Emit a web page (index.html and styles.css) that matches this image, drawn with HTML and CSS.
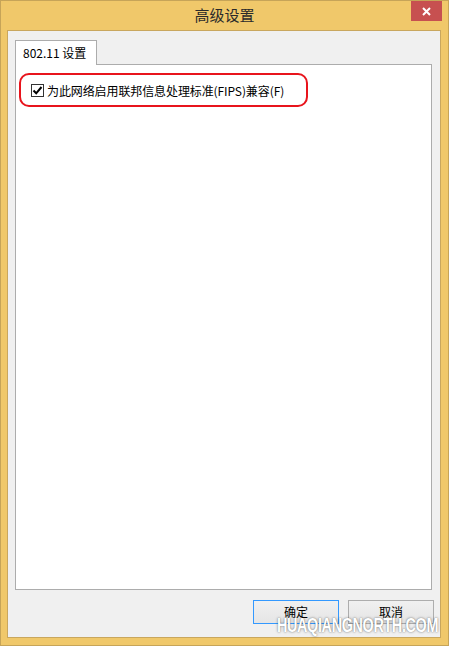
FILE: index.html
```html
<!DOCTYPE html>
<html lang="zh-CN">
<head>
<meta charset="utf-8">
<title>高级设置</title>
<link rel="stylesheet" href="styles.css">
</head>
<body>
<div class="window">
  <div class="titlebar">
    <span class="title">高级设置</span>
    <div class="close">
      <svg width="9" height="9" viewBox="0 0 9 9"><path d="M1 1 L8 8 M8 1 L1 8" stroke="#fff" stroke-width="2" fill="none"/></svg>
    </div>
  </div>
  <div class="client">
    <div class="tabs">
      <div class="tab">802.11 设置</div>
    </div>
    <div class="panel">
      <div class="highlight">
        <label class="check-row">
          <span class="checkbox">
            <svg width="11" height="11" viewBox="0 0 11 11"><path d="M1.5 5.5 L4.2 8.3 L9.5 2" stroke="#000" stroke-width="2" fill="none"/></svg>
          </span>
          <span class="check-label">为此网络启用联邦信息处理标准(FIPS)兼容(F)</span>
        </label>
      </div>
    </div>
    <div class="buttons">
      <div class="btn btn-default">确定</div>
      <div class="btn">取消</div>
    </div>
  </div>
  <div class="watermark">HUAQIANGNORTH.COM</div>
</div>
</body>
</html>
```

FILE: styles.css
```css
* {
  box-sizing: border-box;
}
html, body {
  margin: 0;
  padding: 0;
}
body {
  width: 449px;
  height: 646px;
  overflow: hidden;
  font-family: "Noto Sans CJK SC", "Noto Sans", sans-serif;
  font-size: 12px;
  color: #000;
}
.window {
  position: relative;
  width: 449px;
  height: 646px;
  border: 1px solid #c6a458;
  background: #f0c86a;
  display: flex;
  flex-direction: column;
  padding: 0 7px 7px 6px;
}
.titlebar {
  height: 29px;
  display: flex;
  align-items: center;
  justify-content: center;
}
.title {
  font-size: 15px;
  line-height: 18px;
  color: #2a2a2a;
  margin-left: 1px;
  margin-top: -1px;
}
.close {
  position: absolute;
  top: 0;
  right: 6px;
  width: 31px;
  height: 20px;
  background: #c75050;
  display: flex;
  align-items: center;
  justify-content: center;
}
.client {
  flex: 1;
  border: 1px solid #c9a75e;
  background: #f0f0f0;
  display: flex;
  flex-direction: column;
  padding: 9px 8px 0 7px;
}
.tabs {
  display: flex;
}
.tab {
  position: relative;
  z-index: 1;
  height: 25px;
  width: 82px;
  border: 1px solid #acacac;
  border-bottom: none;
  background: #fff;
  margin-bottom: -1px;
  padding-left: 7px;
  line-height: 23px;
  white-space: nowrap;
}
.panel {
  height: 526px;
  border: 1px solid #acacac;
  background: #fff;
  padding: 8px 0 0 3px;
}
.highlight {
  width: 289px;
  height: 34px;
  border: 2px solid #e8141c;
  border-radius: 10px;
  display: flex;
  align-items: center;
  padding-left: 10px;
}
.check-row {
  display: flex;
  align-items: center;
  gap: 3px;
  margin-top: 1px;
}
.checkbox {
  width: 13px;
  height: 13px;
  border: 1px solid #333;
  background: #fff;
  display: flex;
  align-items: center;
  justify-content: center;
}
.check-label {
  line-height: 16px;
  white-space: nowrap;
  letter-spacing: -0.1px;
}
.buttons {
  display: flex;
  justify-content: flex-end;
  gap: 9px;
  margin-top: 10px;
  margin-right: -2px;
}
.btn {
  width: 86px;
  height: 24px;
  border: 1px solid #adadad;
  background: linear-gradient(#f0f0f0, #e5e5e5);
  display: flex;
  align-items: center;
  justify-content: center;
  line-height: 16px;
}
.btn-default {
  border-color: #3399ff;
}
.watermark {
  position: absolute;
  left: 276px;
  top: 613px;
  font-family: "Liberation Sans", sans-serif;
  font-size: 20px;
  font-weight: bold;
  color: #ffffff;
  letter-spacing: -0.5px;
  transform: scaleX(0.72);
  transform-origin: left top;
  text-shadow: 0 0 3px rgba(0, 0, 0, 0.45), 0 0 1px rgba(0, 0, 0, 0.3);
  white-space: nowrap;
}
```
